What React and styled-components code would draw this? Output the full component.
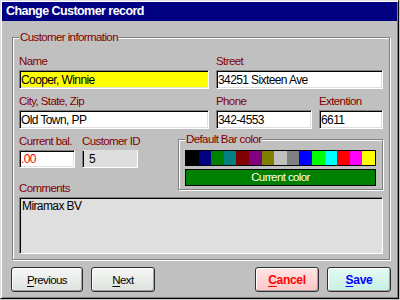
import React from "react";
import styled, { createGlobalStyle } from "styled-components";

const GlobalStyle = createGlobalStyle`
  html, body {
    margin: 0;
    padding: 0;
    background: #c0c0c0;
  }
  * {
    box-sizing: border-box;
  }
`;

const Window = styled.div`
  width: 399px;
  height: 299px;
  background: #c0c0c0;
  border: 1px solid;
  border-color: #dfdfdf #000 #000 #dfdfdf;
  box-shadow: inset 1px 1px 0 #fff, inset -1px -1px 0 #808080;
  padding: 1px;
  display: flex;
  flex-direction: column;
  font-family: "Liberation Sans", Arial, sans-serif;
`;

const TitleBar = styled.div`
  height: 19px;
  background: #000080;
  color: #fff;
  font-weight: bold;
  font-size: 12.5px;
  letter-spacing: -0.55px;
  line-height: 19px;
  padding-left: 4px;
  white-space: nowrap;
`;

const Group = styled.fieldset`
  margin: ${(p) => p.$margin || "0"};
  padding: ${(p) => p.$padding || "0"};
  min-width: 0;
  border: 1px solid #808080;
  box-shadow: 1px 1px 0 #fff, inset 1px 1px 0 #fff;
`;

const Legend = styled.legend`
  padding: 0 1px;
  background: #c0c0c0;
  color: #800000;
  font-size: 11.5px;
  letter-spacing: -0.6px;
  line-height: 13px;
  white-space: nowrap;
`;

const TopGrid = styled.div`
  display: grid;
  grid-template-columns: 190px 96px 64px;
  column-gap: 7px;
  row-gap: 6px;
`;

const Field = styled.div`
  display: flex;
  flex-direction: column;
  grid-column: ${(p) => p.$span || "auto"};
`;

const Label = styled.div`
  color: #800000;
  font-size: 11.5px;
  letter-spacing: -0.6px;
  line-height: 13px;
  height: 13px;
  margin-bottom: 2px;
  margin-top: ${(p) => p.$top || "0"};
  white-space: nowrap;
  grid-column: ${(p) => p.$col || "auto"};
  grid-row: ${(p) => p.$row || "auto"};
`;

const Cell = styled.div`
  grid-column: ${(p) => p.$col};
  grid-row: ${(p) => p.$row};
`;

const Input = styled.input`
  display: block;
  width: 100%;
  height: ${(p) => p.$height || "19px"};
  margin: 0;
  padding: 0 0 0 1px;
  font-family: "Liberation Sans", Arial, sans-serif;
  font-size: 12px;
  letter-spacing: -0.6px;
  color: ${(p) => p.$color || "#000"};
  background: ${(p) => p.$bg || "#fff"};
  border: 1px solid;
  border-color: #808080 #fff #fff #808080;
  box-shadow: inset 1px 1px 0 #000, inset -1px -1px 0 #dfdfdf;
  outline: none;
`;

const ReadOnlyBox = styled.div`
  height: 18px;
  background: #dedede;
  border: 1px solid;
  border-color: #dedede #fff #fff #808080;
  box-shadow: inset 1px 0 0 #000;
  padding-left: 6px;
  font-size: 12px;
  line-height: 16px;
  color: #000;
`;

const BottomGrid = styled.div`
  display: grid;
  grid-template-columns: 56px 56px 26px 205px;
  column-gap: 7px;
  margin-top: 6px;
`;

const BarGroup = styled(Group)`
  grid-column: 4;
  grid-row: 1 / 4;
  align-self: start;
  margin-top: -2px;
  width: 205px;
`;

const Swatches = styled.div`
  display: flex;
  height: 16px;
  border: 1px solid #000;
`;

const Swatch = styled.div`
  flex: 1;
  background: ${(p) => p.$color};
`;

const CurrentColor = styled.div`
  height: 17px;
  margin-top: 3px;
  border: 1px solid #000;
  background: #008000;
  color: #fff;
  font-size: 11.5px;
  letter-spacing: -0.6px;
  line-height: 15px;
  text-align: center;
`;

const Comments = styled.div`
  height: 57px;
  background: #dfdfdf;
  border: 1px solid;
  border-color: #808080 #fff #fff #808080;
  box-shadow: inset 1px 1px 0 #000;
  padding: 2px 0 0 2px;
  font-size: 12px;
  letter-spacing: -0.6px;
  line-height: 13px;
`;

const ButtonRow = styled.div`
  display: flex;
  justify-content: space-between;
  margin: 7px 6px 0 9px;
`;

const ButtonGroup = styled.div`
  display: flex;
  gap: 8px;
`;

const tones = {
  plain: { top: "#f6f8f6", bottom: "#dde2dd", color: "#000", weight: "normal" },
  cancel: { top: "#ffe4e4", bottom: "#ffc6c6", color: "#ff0000", weight: "bold" },
  save: { top: "#e4faf4", bottom: "#c6f0e6", color: "#0000ff", weight: "bold" },
};

const Button = styled.button`
  width: ${(p) => p.$width || "64px"};
  height: 25px;
  margin: 0;
  padding: 0;
  border: 1px solid #303030;
  border-radius: 3px;
  background: linear-gradient(
    ${(p) => tones[p.$tone].top},
    ${(p) => tones[p.$tone].bottom}
  );
  box-shadow: inset 1px 1px 0 #fff, inset -1px -1px 0 #a0a0a0;
  font-family: "Liberation Sans", Arial, sans-serif;
  font-size: ${(p) => (p.$tone === "plain" ? "11.5px" : "12px")};
  letter-spacing: ${(p) => (p.$tone === "plain" ? "-0.6px" : "-0.3px")};
  font-weight: ${(p) => tones[p.$tone].weight};
  color: ${(p) => tones[p.$tone].color};
  cursor: pointer;

  u {
    text-underline-offset: 2px;
  }
`;

const barColors = [
  "#000000", "#000080", "#008000", "#008080", "#800000",
  "#800080", "#808000", "#c0c0c0", "#808080", "#0000ff",
  "#00ff00", "#00ffff", "#ff0000", "#ff00ff", "#ffff00",
];

export default function App() {
  return (
    <>
      <GlobalStyle />
      <Window>
        <TitleBar>Change Customer record</TitleBar>
        <Group $margin="10px 7px 0 10px" $padding="11px 6px 5px 6px">
          <Legend>Customer information</Legend>
          <TopGrid>
            <Field>
              <Label>Name</Label>
              <Input $bg="#ffff00" defaultValue="Cooper, Winnie" />
            </Field>
            <Field $span="2 / 4">
              <Label>Street</Label>
              <Input defaultValue="34251 Sixteen Ave" />
            </Field>
            <Field>
              <Label>City, State,  Zip</Label>
              <Input defaultValue="Old Town, PP" />
            </Field>
            <Field>
              <Label>Phone</Label>
              <Input defaultValue="342-4553" />
            </Field>
            <Field>
              <Label>Extention</Label>
              <Input defaultValue="6611" />
            </Field>
          </TopGrid>
          <BottomGrid>
            <Label $col="1" $row="1">Current bal.</Label>
            <Label $col="2" $row="1">Customer ID</Label>
            <Cell $col="1" $row="2">
              <Input $height="18px" $color="#ff0000" defaultValue=".00" />
            </Cell>
            <Cell $col="2" $row="2">
              <ReadOnlyBox>5</ReadOnlyBox>
            </Cell>
            <Label $col="1 / 4" $row="3" $top="14px">Comments</Label>
            <BarGroup $padding="4px 6px 3px 6px">
              <Legend>Default Bar color</Legend>
              <Swatches>
                {barColors.map((c) => (
                  <Swatch key={c} $color={c} />
                ))}
              </Swatches>
              <CurrentColor>Current color</CurrentColor>
            </BarGroup>
          </BottomGrid>
          <Comments>Miramax BV</Comments>
        </Group>
        <ButtonRow>
          <ButtonGroup>
            <Button $tone="plain" $width="72px">
              <u>P</u>revious
            </Button>
            <Button $tone="plain">
              <u>N</u>ext
            </Button>
          </ButtonGroup>
          <ButtonGroup>
            <Button $tone="cancel">
              <u>C</u>ancel
            </Button>
            <Button $tone="save">
              <u>S</u>ave
            </Button>
          </ButtonGroup>
        </ButtonRow>
      </Window>
    </>
  );
}
